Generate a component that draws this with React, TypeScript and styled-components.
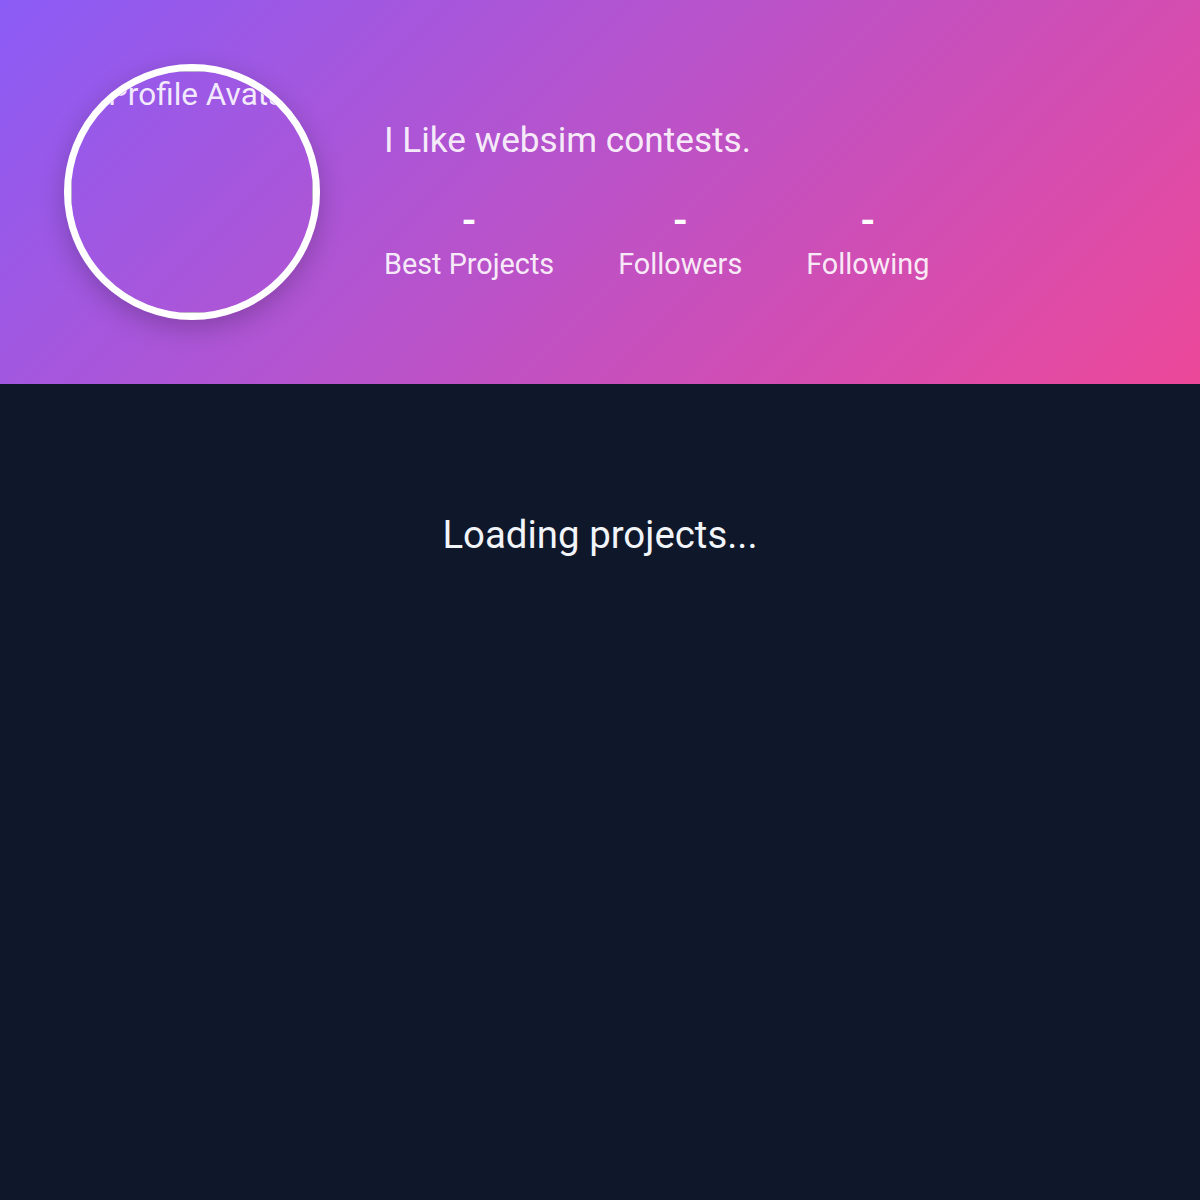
import React from 'react'
import styled, { createGlobalStyle } from 'styled-components'

const GlobalStyle = createGlobalStyle`
  html, body {
    margin: 0;
    padding: 0;
    background: #0f172a;
    font-family: Roboto, 'Liberation Sans', sans-serif;
  }
  * { box-sizing: border-box; }
`

const stats = [
  { label: 'Best Projects', value: '-' },
  { label: 'Followers', value: '-' },
  { label: 'Following', value: '-' },
]

const App = () => {
  return (
    <Page>
      <GlobalStyle />
      <Header>
        <Avatar>
          <BrokenImage>
            <AltText>Profile Avatar</AltText>
          </BrokenImage>
        </Avatar>
        <Info>
          <Bio>I Like websim contests.</Bio>
          <Stats>
            {stats.map((s) => (
              <Stat key={s.label}>
                <StatValue>{s.value}</StatValue>
                <StatLabel>{s.label}</StatLabel>
              </Stat>
            ))}
          </Stats>
        </Info>
      </Header>
      <Main>
        <Loading>Loading projects...</Loading>
      </Main>
    </Page>
  )
}

export default App

const Page = styled.div`
  min-height: 1200px;
  background: #0f172a;
  color: #f8fafc;
`
const Header = styled.header`
  height: 384px;
  padding: 64px;
  display: flex;
  align-items: center;
  gap: 64px;
  background: linear-gradient(135deg, #8b5cf6 0%, #ec4899 100%);
`
const Avatar = styled.div`
  width: 256px;
  height: 256px;
  flex-shrink: 0;
  border-radius: 50%;
  border: 7.5px solid #ffffff;
  overflow: hidden;
  box-shadow: 0 8px 26px rgba(0, 0, 0, 0.22);
`
const BrokenImage = styled.div`
  width: 100%;
  height: 100%;
  border: 1.6px solid rgba(192, 192, 192, 0.9);
  padding: 6px 0 0 36px;
`
const AltText = styled.span`
  display: block;
  white-space: nowrap;
  font-size: 31.5px;
  line-height: 1.1;
  color: rgba(255, 255, 255, 0.88);
`
const Info = styled.div`
  display: flex;
  flex-direction: column;
  padding-top: 17px;
  color: rgba(255, 255, 255, 0.9);
`
const Bio = styled.p`
  margin: 0 0 37px;
  font-size: 35.2px;
  line-height: 1.172;
`
const Stats = styled.div`
  display: flex;
  gap: 64px;
`
const Stat = styled.div`
  display: flex;
  flex-direction: column;
  align-items: center;
`
const StatValue = styled.span`
  font-size: 38.4px;
  font-weight: 700;
  line-height: 1.172;
  color: #ffffff;
  margin-bottom: 5px;
`
const StatLabel = styled.span`
  font-size: 28.8px;
  line-height: 1.172;
`
const Main = styled.main`
  padding: 128px 64px 64px;
  display: flex;
  justify-content: center;
`
const Loading = styled.p`
  margin: 0;
  font-size: 38.4px;
  line-height: 1.172;
  color: #f1f5f9;
`
